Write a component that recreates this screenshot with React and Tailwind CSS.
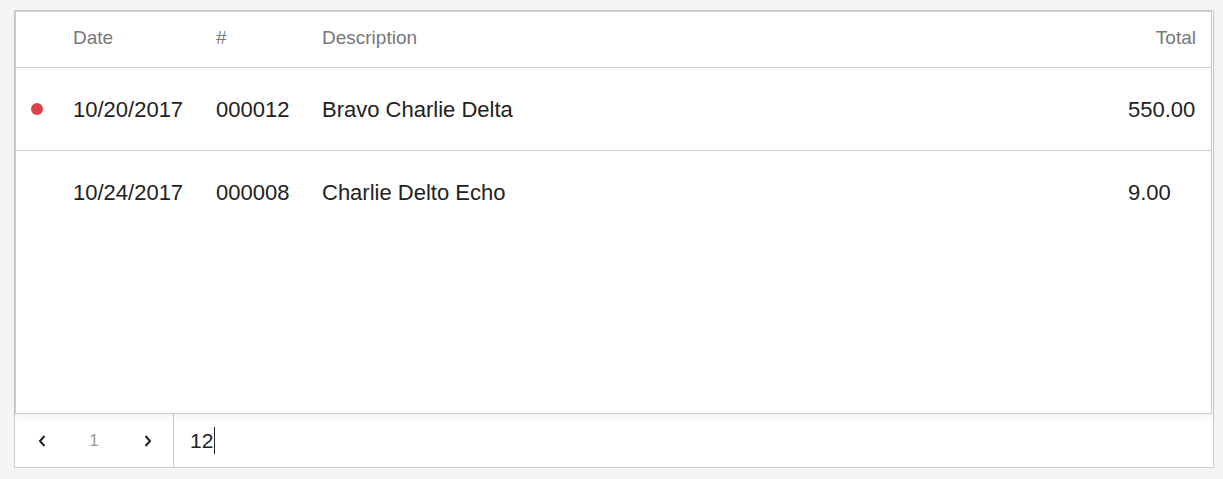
import React from 'react';

const rows = [
  { id: 1, flagged: true, date: '10/20/2017', num: '000012', desc: 'Bravo Charlie Delta', total: '550.00' },
  { id: 2, flagged: false, date: '10/24/2017', num: '000008', desc: 'Charlie Delto Echo', total: '9.00' },
];

function Chevron({ dir }) {
  return (
    <svg width="8" height="12" viewBox="0 0 8 12" fill="none">
      <path
        d={dir === 'left' ? 'M6.5 1 L2 6 L6.5 11' : 'M1.5 1 L6 6 L1.5 11'}
        stroke="#222"
        strokeWidth="2"
      />
    </svg>
  );
}

export default function App() {
  const cols = 'grid grid-cols-[57px_143px_106px_1fr_68px] pr-[15px]';
  return (
    <div className="min-h-screen bg-[#f5f5f5] pt-[10px] pl-[14px] font-['Liberation_Sans',Arial,sans-serif]">
      <div className="w-[1200px] h-[458px] border border-[#cccccc] bg-white flex flex-col">
        {/* Table */}
        <div className="w-[1197px] h-[403px] border border-[#cccccc] bg-white shadow-[0_3px_6px_rgba(0,0,0,0.06)] relative z-10">
          <div className={`${cols} h-[56px] pb-[3px] items-center border-b border-[#cccccc] text-[19px] text-[#777777]`}>
            <div />
            <div>Date</div>
            <div>#</div>
            <div>Description</div>
            <div className="text-right">Total</div>
          </div>
          {rows.map((row, i) => (
            <div
              key={row.id}
              className={`${cols} h-[83px] items-center text-[22px] text-[#222222] ${i === 0 ? 'border-b border-[#cccccc]' : ''}`}
            >
              <div className="pl-[15px]">
                {row.flagged && <div className="w-[12px] h-[12px] rounded-full bg-[#d9434a]" />}
              </div>
              <div>{row.date}</div>
              <div>{row.num}</div>
              <div>{row.desc}</div>
              <div>{row.total}</div>
            </div>
          ))}
        </div>

        {/* Pager */}
        <div className="flex flex-1">
          <div className="w-[159px] border-r border-[#cccccc] flex items-center">
            <button className="w-[52px] flex justify-center pl-[1px]">
              <Chevron dir="left" />
            </button>
            <span className="w-[54px] text-center text-[17px] text-[#999999]">1</span>
            <button className="w-[52px] flex justify-center pl-[2px]">
              <Chevron dir="right" />
            </button>
          </div>
          <div className="flex items-center pl-[16px]">
            <span className="text-[21px] text-[#222222] leading-none">12</span>
            <span className="w-[1px] h-[27px] bg-[#222222] ml-[1px]" />
          </div>
        </div>
      </div>
    </div>
  );
}
